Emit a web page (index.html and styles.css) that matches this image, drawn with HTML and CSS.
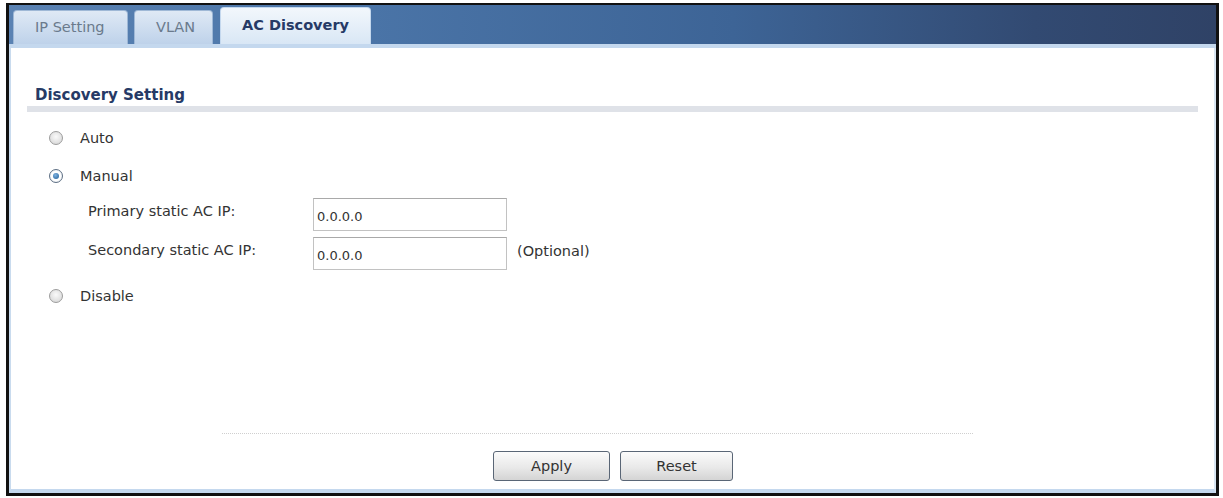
FILE: index.html
```html
<!DOCTYPE html>
<html lang="en">

<head>
    <meta charset="UTF-8">
    <title>AC Discovery</title>
    <link rel="stylesheet" href="styles.css">
</head>

<body>

    <div class="frame">
        <div class="tabbar">
            <div class="tab tab-ip">IP Setting</div>
            <div class="tab tab-vlan">VLAN</div>
            <div class="tab tab-ac active">AC Discovery</div>
        </div>

        <div class="content">
            <h2 class="section-title">Discovery Setting</h2>

            <div class="options">
                <label class="radio-row">
                    <span class="radio"></span>
                    <span>Auto</span>
                </label>

                <label class="radio-row">
                    <span class="radio checked"></span>
                    <span>Manual</span>
                </label>

                <div class="field-row">
                    <span class="field-label">Primary static AC IP:</span>
                    <input type="text" class="ip-input" value="0.0.0.0">
                </div>

                <div class="field-row">
                    <span class="field-label">Secondary static AC IP:</span>
                    <input type="text" class="ip-input" value="0.0.0.0">
                    <span class="hint">(Optional)</span>
                </div>

                <label class="radio-row disable-row">
                    <span class="radio"></span>
                    <span>Disable</span>
                </label>
            </div>

            <div class="actions">
                <button type="button" class="apply">Apply</button>
                <button type="button" class="reset">Reset</button>
            </div>
        </div>
    </div>

</body>

</html>
```

FILE: styles.css
```css
body {
    margin: 0;
    padding: 0;
    background-color: #fff;
    font-family: "DejaVu Sans", Verdana, sans-serif;
    font-size: 14.5px;
    color: #333;
}

.frame {
    width: 1207px;
    height: 488px;
    margin: 3px 0 0 6px;
    border: 3px solid #111;
    border-top-width: 2px;
    display: flex;
    flex-direction: column;
    background-color: #fff;
}

/* barra superior com as abas */
.tabbar {
    height: 39px;
    display: flex;
    align-items: flex-end;
    padding-left: 4px;
    background: linear-gradient(to right, #5a82b3 0%, #4a74a7 30%, #3d6496 60%, #324a72 85%, #2f4266 100%);
    border-bottom: 4px solid #c4d8ee;
}

.tab {
    box-sizing: border-box;
    height: 34px;
    display: flex;
    align-items: center;
    padding: 0 0 2px 21px;
    border: 1px solid #9fb8d6;
    border-bottom: none;
    border-radius: 4px 4px 0 0;
    background: linear-gradient(to bottom, #dfe9f5, #bed2ea);
    color: #6a7a8c;
    font-size: 14.5px;
}

.tab-ip {
    width: 115px;
}

.tab-vlan {
    width: 79px;
    margin-left: 6px;
}

.tab-ac {
    width: 151px;
    margin-left: 7px;
}

.tab.active {
    height: 37px;
    background: linear-gradient(to bottom, #f2f7fc, #d9e7f5);
    color: #263a66;
    font-weight: bold;
    border-color: #c4d8ee;
}

.content {
    flex: 1;
    border-left: 2px solid #c9dbee;
    border-right: 2px solid #d8e5f2;
    border-bottom: 4px solid #c4d8ee;
    padding: 0 16px;
    display: flex;
    flex-direction: column;
}

.section-title {
    margin: 38px 0 0 8px;
    font-size: 15px;
    line-height: 18px;
    font-weight: bold;
    color: #263a66;
}

.section-title::after {
    content: "";
    display: block;
    height: 6px;
    margin: 2px 0 0 -8px;
    background-color: #dfe2e8;
}

.options {
    margin-top: 7px;
    padding-left: 22px;
}

.radio-row {
    display: flex;
    align-items: center;
    gap: 17px;
    height: 38px;
}

.radio {
    width: 12px;
    height: 12px;
    border-radius: 50%;
    border: 1px solid #9c9c9c;
    background: radial-gradient(circle at 50% 40%, #fafafa, #d2d2d2);
    position: relative;
}

.radio.checked {
    border-color: #5d6f84;
    background: radial-gradient(circle, #fff 55%, #c9d2dc);
}

.radio.checked::after {
    content: "";
    position: absolute;
    left: 3px;
    top: 3px;
    width: 6px;
    height: 6px;
    border-radius: 50%;
    background: radial-gradient(circle at 40% 35%, #7fb2e0, #1f5e98);
}

.field-row {
    display: flex;
    align-items: center;
    height: 33px;
    margin-top: 3px;
    padding-left: 39px;
}

.field-row + .field-row {
    margin-top: 6px;
}

.field-label {
    width: 225px;
    padding-bottom: 8px;
}

.ip-input {
    box-sizing: border-box;
    width: 194px;
    height: 33px;
    padding: 3px 0 0 3px;
    border: 1px solid #c2c2c2;
    border-top-color: #a9a9a9;
    font-family: inherit;
    font-size: 13px;
    color: #333;
}

.hint {
    margin-left: 10px;
    padding-bottom: 6px;
}

.disable-row {
    margin-top: 7px;
}

.actions {
    margin: auto 0 8px 195px;
    width: 751px;
    border-top: 1px dotted #cfcfcf;
    padding: 17px 0 0 271px;
    box-sizing: border-box;
    display: flex;
    gap: 10px;
}

.actions button {
    width: 117px;
    height: 30px;
    border: 1px solid #5a6676;
    border-radius: 3px;
    background: linear-gradient(to bottom, #fbfbfb, #e9e9e9 55%, #d4d4d4);
    font-family: inherit;
    font-size: 14.5px;
    color: #333;
    cursor: pointer;
}

.actions button.reset {
    width: 113px;
}
```
